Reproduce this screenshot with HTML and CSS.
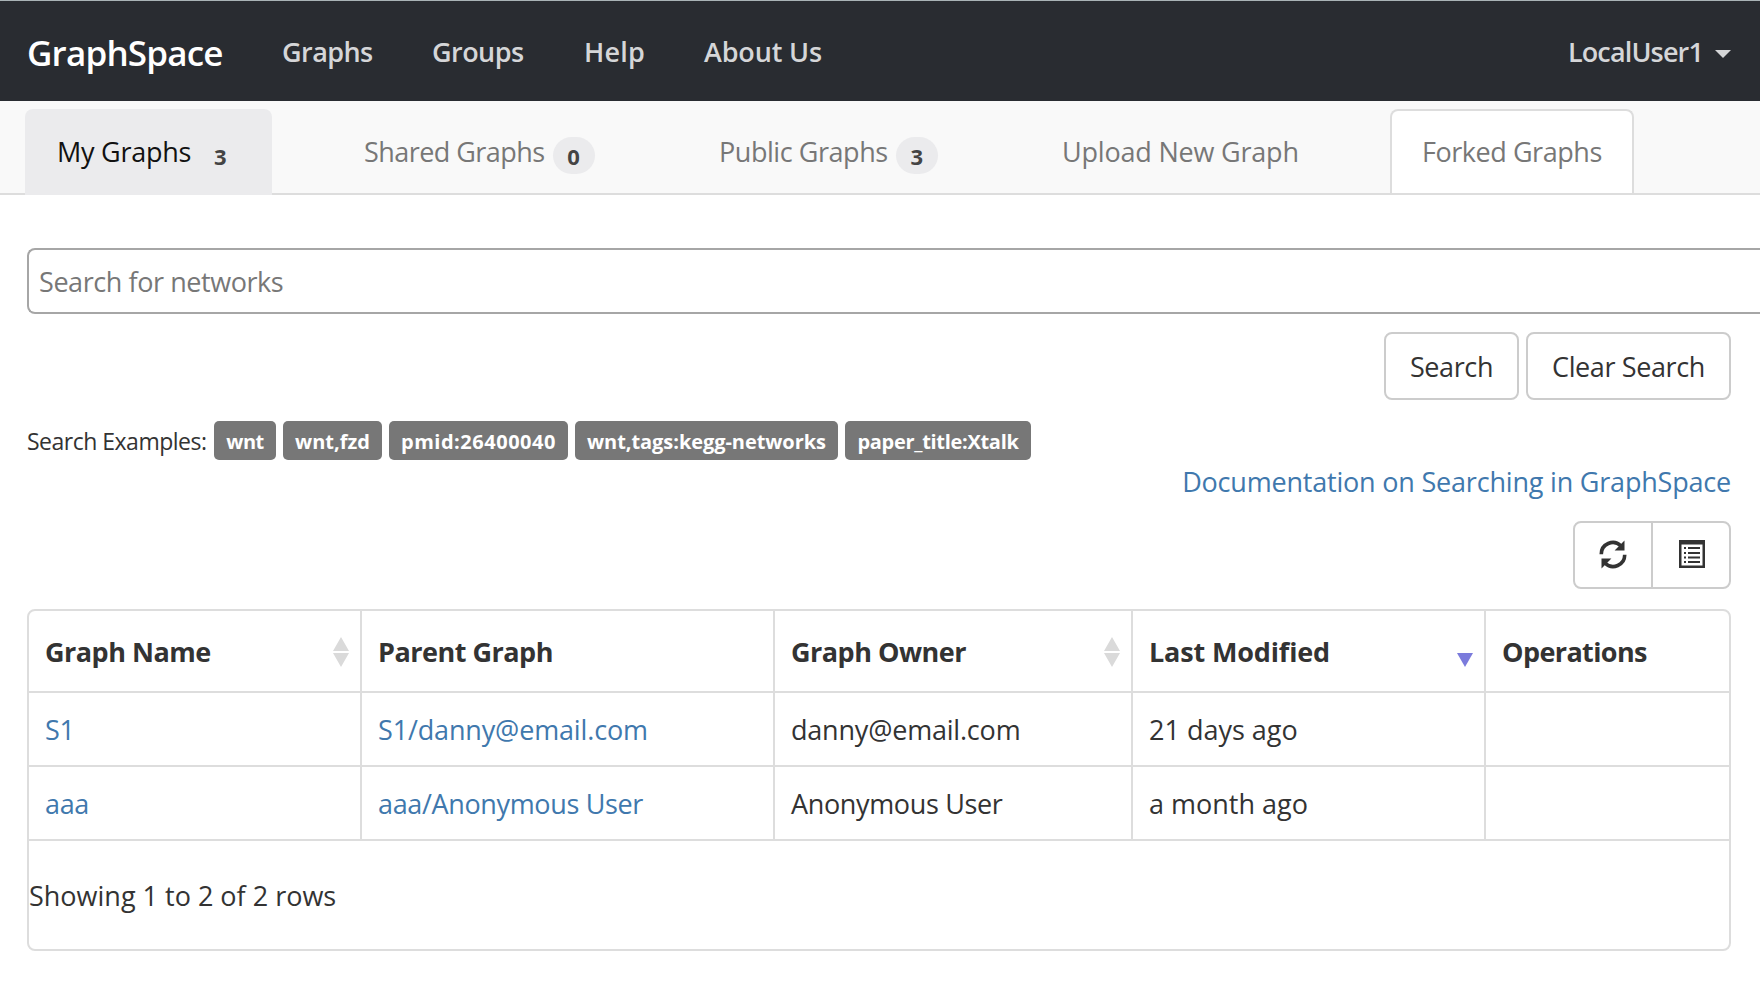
FILE: index.html
```html
<!DOCTYPE html>
<html lang="en">
<head>
<meta charset="utf-8">
<title>GraphSpace</title>
<link rel="stylesheet" href="styles.css">
</head>
<body>
<div class="page">
  <header class="navbar">
    <a class="brand">GraphSpace</a>
    <nav class="nav">
      <a class="nav-link nav-graphs">Graphs</a>
      <a class="nav-link nav-groups">Groups</a>
      <a class="nav-link nav-help">Help</a>
      <a class="nav-link nav-about">About Us</a>
    </nav>
    <a class="user">LocalUser1<span class="caret"></span></a>
  </header>

  <div class="tabs">
    <a class="tab tab-my">My Graphs<span class="badge">3</span></a>
    <a class="tab tab-shared">Shared Graphs<span class="badge">0</span></a>
    <a class="tab tab-public">Public Graphs<span class="badge">3</span></a>
    <a class="tab tab-upload">Upload New Graph</a>
    <a class="tab tab-forked">Forked Graphs</a>
  </div>

  <main class="content">
    <div class="search-box"><span class="placeholder">Search for networks</span></div>
    <div class="actions">
      <button class="btn btn-search">Search</button>
      <button class="btn btn-clear">Clear Search</button>
    </div>
    <div class="examples">
      <span class="examples-title">Search Examples:</span>
      <span class="label label-wnt">wnt</span>
      <span class="label label-fzd">wnt,fzd</span>
      <span class="label label-pmid">pmid:26400040</span>
      <span class="label label-tags">wnt,tags:kegg-networks</span>
      <span class="label label-paper">paper_title:Xtalk</span>
    </div>
    <a class="doc-link">Documentation on Searching in GraphSpace</a>
    <div class="tools">
      <button class="tool">
        <svg class="icon icon-refresh" viewBox="0 0 28 29">
          <path d="M2.300 14.2A11.500 11.500 0 0 1 21.8 5.8" fill="none" stroke="#333" stroke-width="3.6"/>
          <path d="M25.500 0.5V10.4H15.6Z" fill="#333"/>
          <path d="M25.700 14.8A11.500 11.500 0 0 1 6.2 23.2" fill="none" stroke="#333" stroke-width="3.6"/>
          <path d="M2.500 28.5V18.6H12.4Z" fill="#333"/>
        </svg>
      </button>
      <button class="tool">
        <svg class="icon icon-list" viewBox="0 0 26 28">
          <path fill="#333" fill-rule="evenodd" d="M0 0H26V28H0ZM2.500 4.500V25.500H23.500V4.500Z"/>
          <path fill="#333" d="M5 7H7V9H5ZM9 7H21V9H9ZM5 12H7V14H5ZM9 12H21V14H9ZM5 16.500H7V18.500H5ZM9 16.500H21V18.500H9ZM5 21H7V23H5ZM9 21H21V23H9Z"/>
        </svg>
      </button>
    </div>

    <div class="table">
      <div class="row head">
        <div class="cell">Graph Name
          <svg class="sort" viewBox="0 0 16 30"><path d="M8 0L16 14H0ZM0 16H16L8 30Z" fill="#dadada"/></svg>
        </div>
        <div class="cell">Parent Graph</div>
        <div class="cell">Graph Owner
          <svg class="sort" viewBox="0 0 16 30"><path d="M8 0L16 14H0ZM0 16H16L8 30Z" fill="#dadada"/></svg>
        </div>
        <div class="cell cell-modified">Last Modified
          <svg class="sort" viewBox="0 0 16 30"><path d="M0 16H16L8 30Z" fill="#7b7bdc"/></svg>
        </div>
        <div class="cell cell-ops">Operations</div>
      </div>
      <div class="row">
        <div class="cell"><a class="link">S1</a></div>
        <div class="cell"><a class="link link-email">S1/danny@email.com</a></div>
        <div class="cell cell-email">danny@email.com</div>
        <div class="cell cell-date">21 days ago</div>
        <div class="cell"></div>
      </div>
      <div class="row">
        <div class="cell"><a class="link">aaa</a></div>
        <div class="cell"><a class="link">aaa/Anonymous User</a></div>
        <div class="cell">Anonymous User</div>
        <div class="cell cell-date">a month ago</div>
        <div class="cell"></div>
      </div>
      <div class="footer">Showing 1 to 2 of 2 rows</div>
    </div>
  </main>
</div>
</body>
</html>
```

FILE: styles.css
```css
* { box-sizing: border-box; }
body {
  margin: 0;
  background: #fff;
  color: #333;
  font-family: "Open Sans", "Noto Sans", sans-serif;
  font-size: 27px;
  line-height: 40px;
  white-space: nowrap;
}
.page { width: 1760px; height: 985px; overflow: hidden; }

/* Top navigation */
.navbar {
  display: flex;
  align-items: flex-start;
  height: 101px;
  border-top: 1px solid #a9b3b6;
  background: #292c31;
  padding: 31px 29px 0 27px;
  font-weight: 600;
  color: #d5d6d8;
}
.brand { padding-top: 1px; font-size: 35px; color: #fff; letter-spacing: -.8px; width: 255px; }
.nav { display: flex; }
.nav-link { letter-spacing: -.55px; }
.nav-graphs { width: 150px; }
.nav-groups { width: 152px; }
.nav-help { width: 120px; letter-spacing: .2px; }
.nav-about { letter-spacing: -.15px; }
.user { display: flex; align-items: flex-start; margin-left: auto; letter-spacing: -.85px; }
.caret {
  margin: 18px 0 0 12px;
  border: 8px solid transparent;
  border-top-color: #d5d6d8;
  border-bottom: 0;
}

/* Graph category tabs */
.tabs {
  display: flex;
  height: 94px;
  padding: 8px 0 0 25px;
  border-bottom: 2px solid #ddd;
  background: #f9f9f9;
  color: #777;
}
.tab {
  display: flex;
  height: 84px;
  padding-top: 23px;
  border-radius: 8px 8px 0 0;
}
.tab-my { height: 86px; width: 247px; padding-left: 32px; background: #ebebed; color: #111; letter-spacing: -.25px; }
.tab-shared { margin-left: 92px; width: 355px; letter-spacing: -.55px; }
.tab-public { width: 343px; letter-spacing: -.45px; }
.tab-upload { width: 328px; letter-spacing: -.2px; }
.tab-forked {
  width: 244px;
  padding: 21px 0 0 30px;
  border: 2px solid #ddd;
  border-bottom: 0;
  background: #fff;
  letter-spacing: -.45px;
}
.badge {
  width: 42px;
  height: 37px;
  margin: 5px 0 0 8px;
  border-radius: 19px;
  background: #ebebed;
  color: #444;
  font-size: 22px;
  font-weight: 700;
  line-height: 38px;
  text-align: center;
  letter-spacing: 0;
}

/* Search area */
.content { display: flex; flex-direction: column; padding: 53px 0 0 27px; }
.search-box {
  height: 66px;
  padding: 12px 10px;
  border: 2px solid #a6a6a6;
  border-right: 0;
  border-radius: 8px 0 0 8px;
  color: #777;
  letter-spacing: -.43px;
}
.actions { display: flex; gap: 7px; margin: 18px 29px 0 auto; }
.btn {
  height: 68px;
  padding: 1px 0 0;
  border: 2px solid #ccc;
  border-radius: 8px;
  background: #fff;
  color: #333;
  font: inherit;
  letter-spacing: -.38px;
}
.btn-search { width: 135px; }
.btn-clear { width: 205px; }
.examples { display: flex; height: 39px; margin-top: 21px; line-height: 40px; }
.examples-title { width: 187px; font-size: 23px; letter-spacing: -.5px; }
.label {
  margin-right: 7px;
  border-radius: 5px;
  background: #777;
  color: #fff;
  font-size: 20px;
  font-weight: 700;
  line-height: 41px;
  text-align: center;
}
.label-wnt { width: 62px; letter-spacing: -.5px; }
.label-fzd { width: 99px; }
.label-pmid { width: 179px; letter-spacing: .52px; }
.label-tags { width: 263px; letter-spacing: -.06px; }
.label-paper { width: 186px; letter-spacing: -.3px; }
.doc-link { align-self: flex-end; margin: 2px 29px 0 0; color: #4078ad; letter-spacing: -.2px; }
.tools {
  display: flex;
  align-self: flex-end;
  width: 158px;
  height: 68px;
  margin: 19px 29px 0 0;
  border: 2px solid #ccc;
  border-radius: 8px;
}
.tool { display: flex; width: 77px; padding: 17px 0 0 24px; border: 0; background: none; }
.tool + .tool { width: 79px; padding-left: 26px; border-left: 2px solid #ccc; }
.icon-refresh { width: 28px; height: 29px; }
.icon-list { width: 26px; height: 28px; }

/* Graph table */
.table {
  width: 1704px;
  height: 342px;
  margin-top: 20px;
  border: 2px solid #ddd;
  border-radius: 8px;
}
.row {
  display: grid;
  grid-template-columns: 333px 413px 358px 353px 243px;
  height: 74px;
  border-bottom: 2px solid #ddd;
}
.cell { display: flex; justify-content: space-between; padding: 17px 11px 0 16px; border-right: 2px solid #ddd; letter-spacing: -.35px; }
.cell:last-child { border-right: 0; }
.head { height: 82px; font-weight: 700; }
.head .cell { padding-top: 21px; letter-spacing: -.5px; }
.head .cell-modified { letter-spacing: -.15px; }
.head .cell-ops { letter-spacing: -.6px; }
.sort { width: 16px; height: 30px; margin-top: 5px; }
.link { color: #4078ad; }
.link-email { letter-spacing: -.15px; }
.cell-email { letter-spacing: -.2px; }
.cell-date { letter-spacing: 0; }
.footer { padding-top: 35px; }
```
